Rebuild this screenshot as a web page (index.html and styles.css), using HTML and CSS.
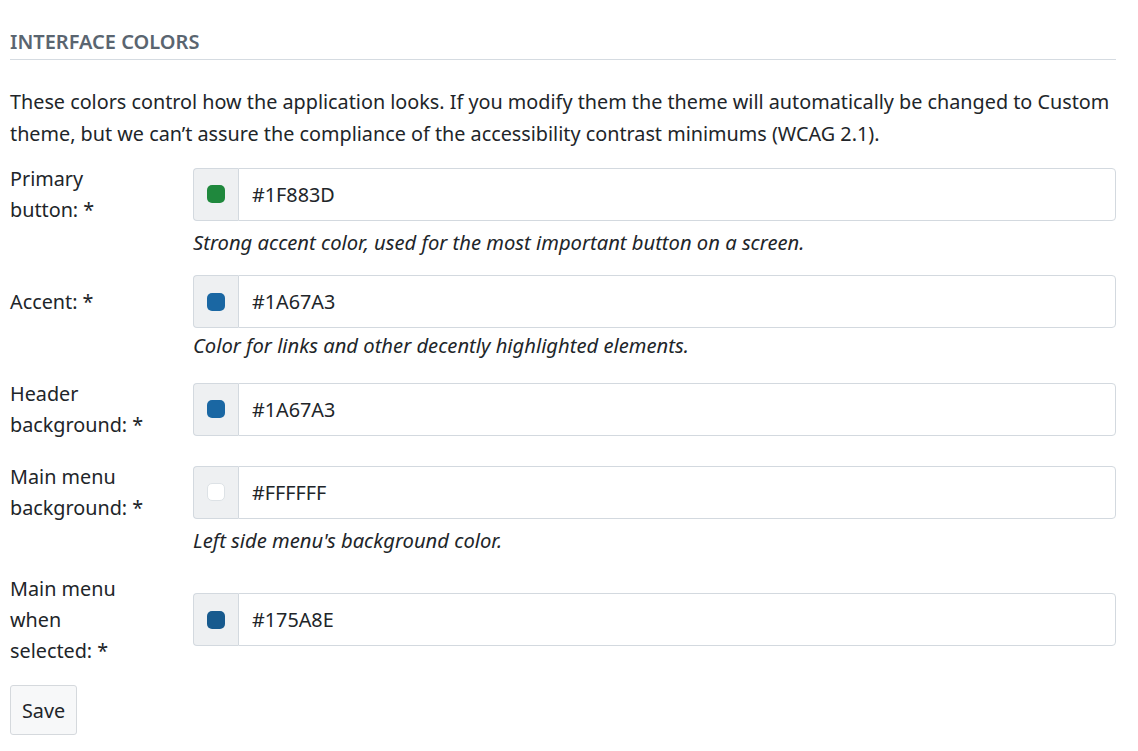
FILE: index.html
```html
<!DOCTYPE html>
<html>
<head>
<meta charset="utf-8">
<link rel="stylesheet" href="styles.css">
</head>
<body>
<div class="page">
  <h2 class="section-title">INTERFACE COLORS</h2>
  <p class="intro">These colors control how the application looks. If you modify them the theme will automatically be changed to Custom theme, but we can’t assure the compliance of the accessibility contrast minimums (WCAG 2.1).</p>

  <div class="group">
    <label class="label">Primary button:&nbsp;*</label>
    <div class="field">
      <span class="addon"><span class="swatch" style="background:#1F883D"></span></span>
      <input class="input" type="text" value="#1F883D">
    </div>
    <div class="help">Strong accent color, used for the most important button on a screen.</div>
  </div>

  <div class="group">
    <label class="label">Accent:&nbsp;*</label>
    <div class="field">
      <span class="addon"><span class="swatch" style="background:#1A67A3"></span></span>
      <input class="input" type="text" value="#1A67A3">
    </div>
    <div class="help">Color for links and other decently highlighted elements.</div>
  </div>

  <div class="group">
    <label class="label">Header background:&nbsp;*</label>
    <div class="field">
      <span class="addon"><span class="swatch" style="background:#1A67A3"></span></span>
      <input class="input" type="text" value="#1A67A3">
    </div>
  </div>

  <div class="group">
    <label class="label">Main menu background:&nbsp;*</label>
    <div class="field">
      <span class="addon"><span class="swatch swatch-light" style="background:#FFFFFF"></span></span>
      <input class="input" type="text" value="#FFFFFF">
    </div>
    <div class="help">Left side menu's background color.</div>
  </div>

  <div class="group">
    <label class="label">Main menu when selected:&nbsp;*</label>
    <div class="field">
      <span class="addon"><span class="swatch" style="background:#175A8E"></span></span>
      <input class="input" type="text" value="#175A8E">
    </div>
  </div>

  <button class="btn" type="button">Save</button>
</div>
</body>
</html>
```

FILE: styles.css
```css
html, body {
  margin: 0;
  padding: 0;
  background: #ffffff;
}
body {
  font-family: "Noto Sans", "Open Sans", sans-serif;
  font-size: 19.8px;
  color: #212529;
}
.page {
  padding: 27px 22px 0 10px;
}
.section-title {
  margin: 0;
  font-size: 20px;
  font-weight: 600;
  color: #5a6570;
  line-height: 30px;
  padding-bottom: 2px;
  border-bottom: 1px solid #d5dbe1;
}
.intro {
  margin: 26px 0 13px 0;
  line-height: 32px;
}
.group {
  display: grid;
  grid-template-columns: 183px 1fr;
  margin-bottom: 21px;
}
.label {
  grid-column: 1;
  grid-row: 1;
  align-self: center;
  line-height: 31px;
  padding-right: 38px;
}
.field {
  grid-column: 2;
  grid-row: 1;
  align-self: center;
  display: flex;
  height: 53px;
}
.addon {
  width: 44px;
  display: flex;
  align-items: center;
  justify-content: center;
  background: #eef0f2;
  border: 1px solid #d3d9df;
  border-right: none;
  border-radius: 4px 0 0 4px;
}
.swatch {
  width: 18px;
  height: 18px;
  border-radius: 5px;
}
.swatch-light {
  border: 1px solid #dde2e6;
  box-sizing: border-box;
}
.input {
  flex: 1;
  min-width: 0;
  border: 1px solid #d3d9df;
  border-radius: 0 4px 4px 0;
  padding: 0 13px;
  font: inherit;
  color: #212529;
  background: #fff;
  outline: none;
}
.help {
  grid-column: 2;
  grid-row: 2;
  font-style: italic;
  font-size: 20.2px;
  line-height: 28px;
  margin-top: 3px;
  margin-bottom: -2px;
}
.btn {
  font: inherit;
  color: #212529;
  background: #f7f8f9;
  border: 1px solid #d5d9dd;
  border-radius: 3px;
  height: 50px;
  padding: 0 11px;
  margin-top: -2px;
}
```
